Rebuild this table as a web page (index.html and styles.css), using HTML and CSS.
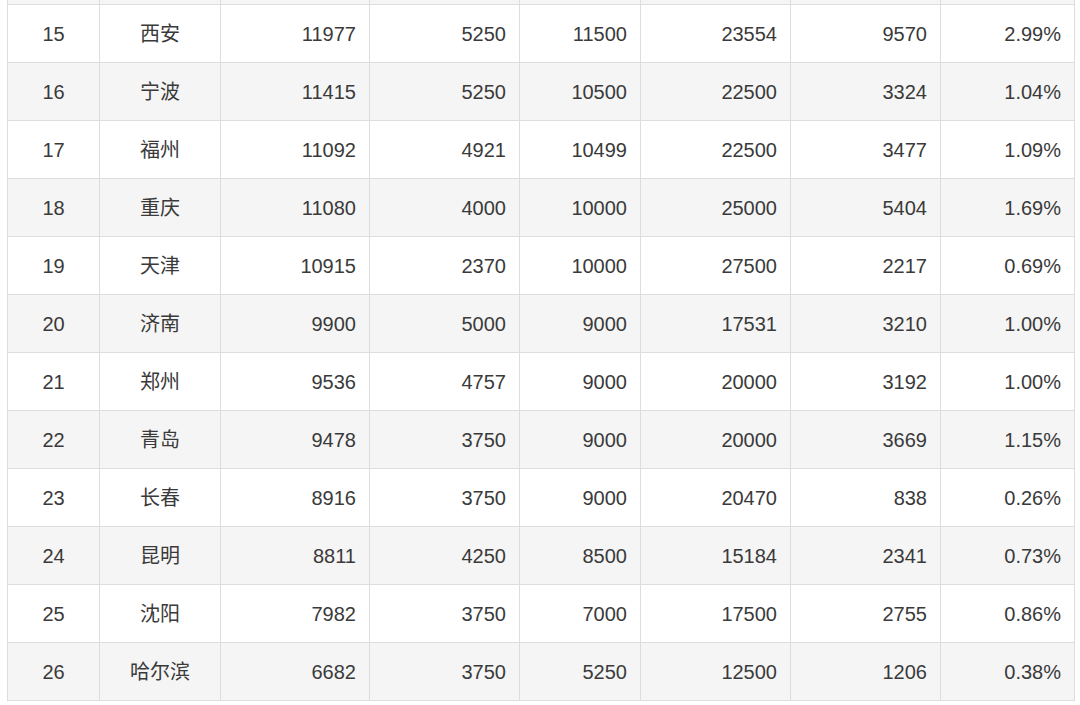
FILE: index.html
```html
<!DOCTYPE html>
<html lang="zh-CN">
<head>
<meta charset="utf-8">
<title>城市数据表</title>
<link rel="stylesheet" href="styles.css">
</head>
<body>
<table class="data">
  <colgroup>
    <col class="c1"><col class="c2"><col class="c3"><col class="c4"><col class="c5"><col class="c6"><col class="c7"><col class="c8">
  </colgroup>
  <tbody>
    <tr><td class="ctr"></td><td class="ctr"></td><td></td><td></td><td></td><td></td><td></td><td></td></tr>
    <tr><td class="ctr">15</td><td class="ctr">西安</td><td>11977</td><td>5250</td><td>11500</td><td>23554</td><td>9570</td><td>2.99%</td></tr>
    <tr><td class="ctr">16</td><td class="ctr">宁波</td><td>11415</td><td>5250</td><td>10500</td><td>22500</td><td>3324</td><td>1.04%</td></tr>
    <tr><td class="ctr">17</td><td class="ctr">福州</td><td>11092</td><td>4921</td><td>10499</td><td>22500</td><td>3477</td><td>1.09%</td></tr>
    <tr><td class="ctr">18</td><td class="ctr">重庆</td><td>11080</td><td>4000</td><td>10000</td><td>25000</td><td>5404</td><td>1.69%</td></tr>
    <tr><td class="ctr">19</td><td class="ctr">天津</td><td>10915</td><td>2370</td><td>10000</td><td>27500</td><td>2217</td><td>0.69%</td></tr>
    <tr><td class="ctr">20</td><td class="ctr">济南</td><td>9900</td><td>5000</td><td>9000</td><td>17531</td><td>3210</td><td>1.00%</td></tr>
    <tr><td class="ctr">21</td><td class="ctr">郑州</td><td>9536</td><td>4757</td><td>9000</td><td>20000</td><td>3192</td><td>1.00%</td></tr>
    <tr><td class="ctr">22</td><td class="ctr">青岛</td><td>9478</td><td>3750</td><td>9000</td><td>20000</td><td>3669</td><td>1.15%</td></tr>
    <tr><td class="ctr">23</td><td class="ctr">长春</td><td>8916</td><td>3750</td><td>9000</td><td>20470</td><td>838</td><td>0.26%</td></tr>
    <tr><td class="ctr">24</td><td class="ctr">昆明</td><td>8811</td><td>4250</td><td>8500</td><td>15184</td><td>2341</td><td>0.73%</td></tr>
    <tr><td class="ctr">25</td><td class="ctr">沈阳</td><td>7982</td><td>3750</td><td>7000</td><td>17500</td><td>2755</td><td>0.86%</td></tr>
    <tr><td class="ctr">26</td><td class="ctr">哈尔滨</td><td>6682</td><td>3750</td><td>5250</td><td>12500</td><td>1206</td><td>0.38%</td></tr>
  </tbody>
</table>
</body>
</html>
```
FILE: styles.css
```css
html, body {
  margin: 0;
  padding: 0;
  background: #ffffff;
}
body {
  font-family: "Liberation Sans", Arial, "Noto Sans CJK SC", sans-serif;
  color: #3a3a3a;
  font-size: 20px;
}
.data {
  border-collapse: collapse;
  table-layout: fixed;
  width: 1067px;
  margin: -54px 0 0 7px;
}
.c1 { width: 92px; }
.c2 { width: 121px; }
.c3 { width: 149px; }
.c4 { width: 150px; }
.c5 { width: 121px; }
.c6 { width: 150px; }
.c7 { width: 150px; }
.c8 { width: 134px; }
.data td {
  border: 1px solid #dddddd;
  height: 58px;
  padding: 0 13px;
  text-align: right;
  vertical-align: middle;
  line-height: 24px;
  box-sizing: border-box;
}
.data td.ctr {
  text-align: center;
}
.data tr:nth-child(odd) td {
  background: #f5f5f5;
}
.data tr:nth-child(even) td {
  background: #ffffff;
}
```
